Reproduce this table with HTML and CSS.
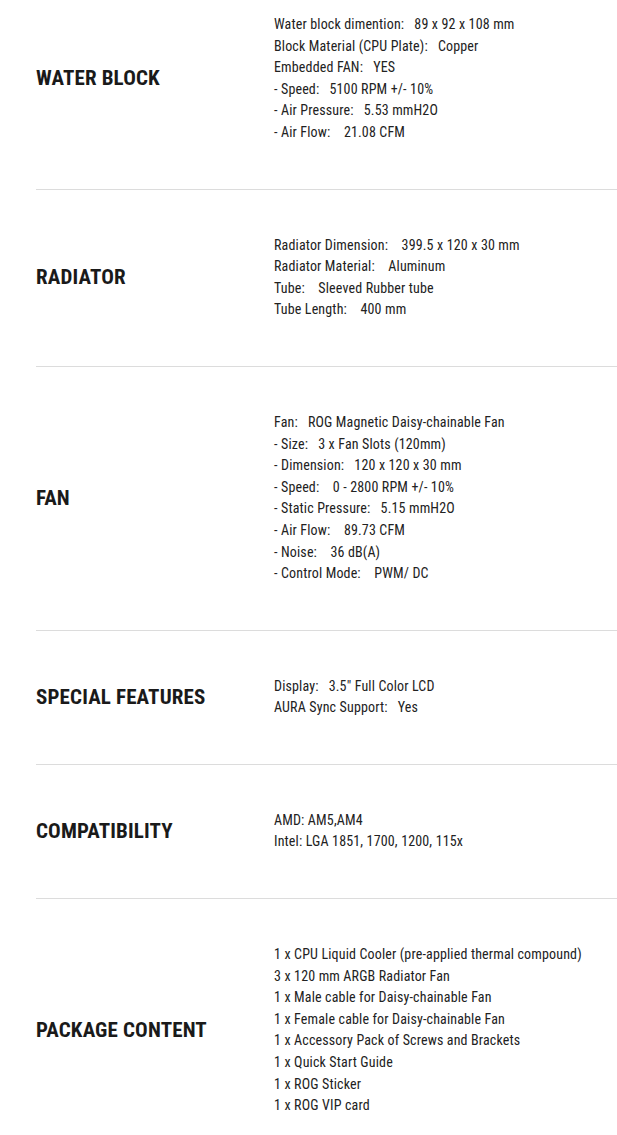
FILE: index.html
```html
<!DOCTYPE html>
<html lang="en">
<head>
<meta charset="utf-8">
<title>Specifications</title>
<link rel="stylesheet" href="styles.css">
</head>
<body>
<div class="specs">
  <section class="row first">
    <h2 class="title">WATER BLOCK</h2>
    <ul class="list">
      <li>Water block dimention:&nbsp;&nbsp; 89 x 92 x 108 mm</li>
      <li>Block Material (CPU Plate):&nbsp;&nbsp; Copper</li>
      <li>Embedded FAN:&nbsp;&nbsp; YES</li>
      <li>- Speed:&nbsp;&nbsp; 5100 RPM +/- 10%</li>
      <li>- Air Pressure:&nbsp;&nbsp; 5.53 mmH2O</li>
      <li>- Air Flow:&nbsp;&nbsp;&nbsp; 21.08 CFM</li>
    </ul>
  </section>
  <section class="row">
    <h2 class="title">RADIATOR</h2>
    <ul class="list">
      <li>Radiator Dimension:&nbsp;&nbsp;&nbsp; 399.5 x 120 x 30 mm</li>
      <li>Radiator Material:&nbsp;&nbsp;&nbsp; Aluminum</li>
      <li>Tube:&nbsp;&nbsp;&nbsp; Sleeved Rubber tube</li>
      <li>Tube Length:&nbsp;&nbsp;&nbsp; 400 mm</li>
    </ul>
  </section>
  <section class="row">
    <h2 class="title">FAN</h2>
    <ul class="list">
      <li>Fan:&nbsp;&nbsp; ROG Magnetic Daisy-chainable Fan</li>
      <li>- Size:&nbsp;&nbsp; 3 x Fan Slots (120mm)</li>
      <li>- Dimension:&nbsp;&nbsp; 120 x 120 x 30 mm</li>
      <li>- Speed:&nbsp;&nbsp;&nbsp; 0 - 2800 RPM +/- 10%</li>
      <li>- Static Pressure:&nbsp;&nbsp; 5.15 mmH2O</li>
      <li>- Air Flow:&nbsp;&nbsp;&nbsp; 89.73 CFM</li>
      <li>- Noise:&nbsp;&nbsp;&nbsp; 36 dB(A)</li>
      <li>- Control Mode:&nbsp;&nbsp;&nbsp; PWM/ DC</li>
    </ul>
  </section>
  <section class="row">
    <h2 class="title">SPECIAL FEATURES</h2>
    <ul class="list">
      <li>Display:&nbsp;&nbsp; 3.5" Full Color LCD</li>
      <li>AURA Sync Support:&nbsp;&nbsp; Yes</li>
    </ul>
  </section>
  <section class="row">
    <h2 class="title">COMPATIBILITY</h2>
    <ul class="list">
      <li>AMD: AM5,AM4</li>
      <li>Intel: LGA 1851, 1700, 1200, 115x</li>
    </ul>
  </section>
  <section class="row last">
    <h2 class="title">PACKAGE CONTENT</h2>
    <ul class="list">
      <li>1 x CPU Liquid Cooler (pre-applied thermal compound)</li>
      <li>3 x 120 mm ARGB Radiator Fan</li>
      <li>1 x Male cable for Daisy-chainable Fan</li>
      <li>1 x Female cable for Daisy-chainable Fan</li>
      <li>1 x Accessory Pack of Screws and Brackets</li>
      <li>1 x Quick Start Guide</li>
      <li>1 x ROG Sticker</li>
      <li>1 x ROG VIP card</li>
    </ul>
  </section>
</div>
</body>
</html>
```

FILE: styles.css
```css
html, body {
  margin: 0;
  padding: 0;
  background: #ffffff;
}

body {
  font-family: "Roboto", "Liberation Sans", sans-serif;
  font-stretch: 75%;
  color: #222222;
}

.specs {
  padding-left: 36px;
}

.row {
  display: flex;
  align-items: center;
  padding: 45px 0;
  border-bottom: 1px solid #dcdcdc;
}

.row.first {
  padding-top: 14px;
}

.row.last {
  border-bottom: none;
}

.title {
  margin: 0;
  width: 238px;
  flex-shrink: 0;
  font-size: 21px;
  font-weight: 700;
  letter-spacing: 0.15px;
  line-height: 1;
  color: #1a1a1a;
}

.list {
  margin: 0;
  padding: 0;
  list-style: none;
  font-size: 14px;
  letter-spacing: 0.15px;
  line-height: 21.6px;
  white-space: nowrap;
}
```
